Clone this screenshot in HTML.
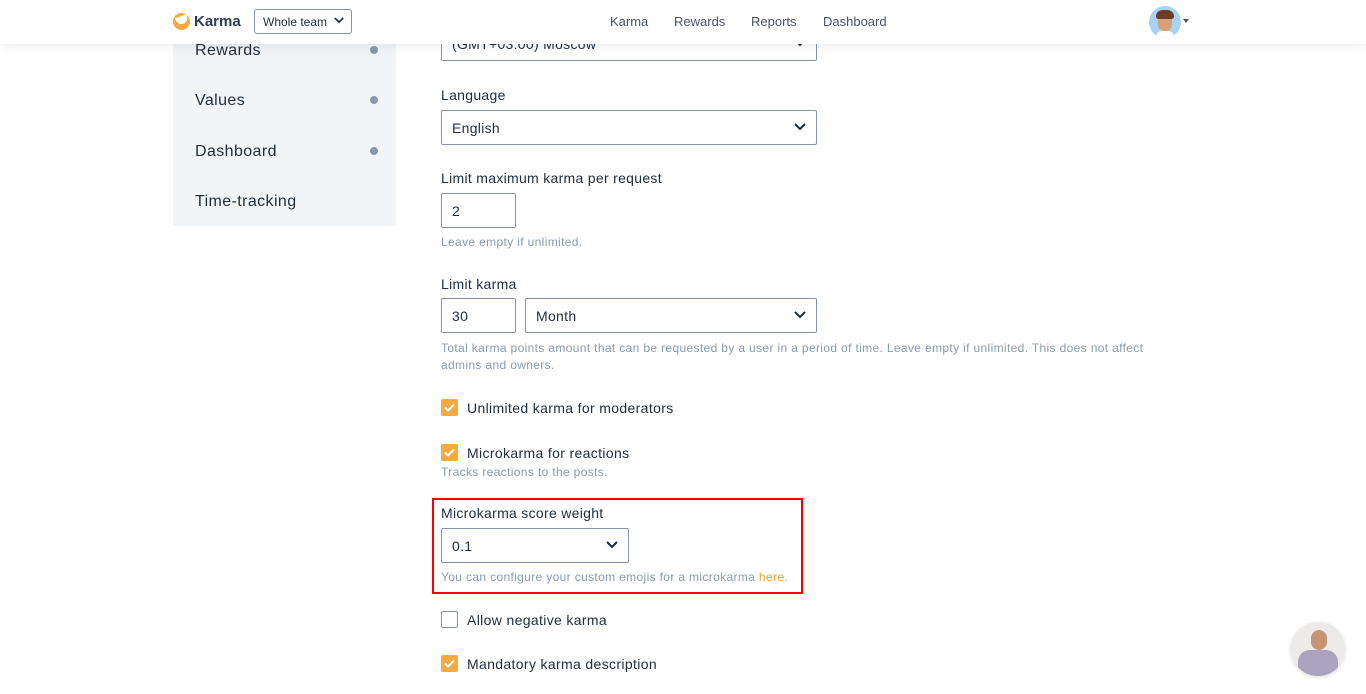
<!DOCTYPE html>
<html><head><style>
*{box-sizing:border-box}
body{margin:0;width:1366px;height:694px;overflow:hidden;background:#fff;font-family:"Liberation Sans",sans-serif;color:#1f2d3d;position:relative}
.hdr{position:absolute;top:0;left:0;width:1366px;height:44px;background:#fff;box-shadow:0 2px 12px rgba(0,0,0,.08);z-index:5}
.side{position:absolute;left:173px;top:20px;width:223px;height:206px;background:#f2f5f8}
.si{position:absolute;left:22px;font-size:16px;color:#1f2d3d;letter-spacing:.4px}
.dot{position:absolute;left:197px;width:8px;height:8px;border-radius:50%;background:#8a98a8}
.a{position:absolute}
.lbl{position:absolute;left:441px;font-size:14px;color:#1f2d3d;letter-spacing:.3px}
.sel{position:absolute;border:1px solid #8593a3;border-radius:2px;background:#fff;font-size:14px;padding-left:10px;display:flex;align-items:center;letter-spacing:.3px}
.chev{position:absolute;right:10px;top:50%;margin-top:-5px}
.help{position:absolute;left:441px;font-size:12px;color:#8a9bb0;line-height:17px;letter-spacing:.35px}
.cb{position:absolute;left:441px;width:17px;height:17px;border-radius:2px;background:#f5a940}
.cb svg{position:absolute;left:3px;top:4px}
.cbl{position:absolute;left:467px;font-size:14px;letter-spacing:.35px}
</style></head><body>
<div class="side">
<div class="si" style="top:22px">Rewards</div><div class="dot" style="top:26px"></div>
<div class="si" style="top:72px">Values</div><div class="dot" style="top:76px"></div>
<div class="si" style="top:123px">Dashboard</div><div class="dot" style="top:127px"></div>
<div class="si" style="top:173px">Time-tracking</div>
</div>
<div class="sel" style="left:441px;top:26px;width:376px;height:35px">(GMT+03:00) Moscow<svg class="chev" width="12" height="8" viewBox="0 0 12 8"><path d="M1 1l5 5 5-5" stroke="#1f2d3d" stroke-width="2" fill="none"/></svg></div>
<div class="hdr">
<div class="a" style="left:173px;top:13px;width:17px;height:17px;border-radius:50%;background:#f5a940;overflow:hidden"><div style="position:absolute;left:3px;top:3px;width:12px;height:8px;border-radius:0 0 8px 8px;background:#fff;transform:rotate(-20deg)"></div></div>
<div class="a" style="left:194px;top:13px;font-size:15px;font-weight:bold;color:#2d3b55">Karma</div>
<div class="sel" style="left:254px;top:9px;width:98px;height:25px;font-size:12px;padding-left:8px;border-radius:3px;letter-spacing:0">Whole team<svg class="chev" style="right:7px" width="10" height="7" viewBox="0 0 12 8"><path d="M1 1l5 5 5-5" stroke="#1f2d3d" stroke-width="2" fill="none"/></svg></div>
<div class="a" style="left:610px;top:14px;font-size:13px;color:#4a5568">Karma</div>
<div class="a" style="left:674px;top:14px;font-size:13px;color:#4a5568">Rewards</div>
<div class="a" style="left:751px;top:14px;font-size:13px;color:#4a5568">Reports</div>
<div class="a" style="left:823px;top:14px;font-size:13px;color:#4a5568">Dashboard</div>
<div class="a" style="left:1149px;top:6px;width:32px;height:32px;border-radius:50%;background:#a9d3f5;overflow:hidden">
<div class="a" style="left:9px;top:9px;width:14px;height:16px;border-radius:6px;background:#d9a07a"></div>
<div class="a" style="left:7px;top:4px;width:18px;height:9px;border-radius:8px 8px 3px 3px;background:#6b3d24"></div>
<div class="a" style="left:7px;top:25px;width:18px;height:8px;background:#fff;border-radius:6px 6px 0 0"></div></div>
<div class="a" style="left:1183px;top:19px;border:3px solid transparent;border-top:4px solid #555"></div>
</div>
<div class="lbl" style="top:87px">Language</div>
<div class="sel" style="left:441px;top:110px;width:376px;height:35px">English<svg class="chev" width="12" height="8" viewBox="0 0 12 8"><path d="M1 1l5 5 5-5" stroke="#1f2d3d" stroke-width="2" fill="none"/></svg></div>
<div class="lbl" style="top:170px">Limit maximum karma per request</div>
<div class="sel" style="left:441px;top:193px;width:75px;height:35px">2</div>
<div class="help" style="top:234px">Leave empty if unlimited.</div>
<div class="lbl" style="top:276px">Limit karma</div>
<div class="sel" style="left:441px;top:298px;width:75px;height:35px">30</div>
<div class="sel" style="left:525px;top:298px;width:292px;height:35px">Month<svg class="chev" width="12" height="8" viewBox="0 0 12 8"><path d="M1 1l5 5 5-5" stroke="#1f2d3d" stroke-width="2" fill="none"/></svg></div>
<div class="help" style="top:340px;width:740px">Total karma points amount that can be requested by a user in a period of time. Leave empty if unlimited. This does not affect admins and owners.</div>
<div class="cb" style="top:399px"><svg width="11" height="9" viewBox="0 0 11 9"><path d="M1 4.5l3 3 6-6" stroke="#fff" stroke-width="2" fill="none"/></svg></div>
<div class="cbl" style="top:400px">Unlimited karma for moderators</div>
<div class="cb" style="top:444px"><svg width="11" height="9" viewBox="0 0 11 9"><path d="M1 4.5l3 3 6-6" stroke="#fff" stroke-width="2" fill="none"/></svg></div>
<div class="cbl" style="top:445px">Microkarma for reactions</div>
<div class="help" style="top:464px">Tracks reactions to the posts.</div>
<div class="a" style="left:432px;top:498px;width:371px;height:96px;border:2px solid #f00"></div>
<div class="lbl" style="top:505px">Microkarma score weight</div>
<div class="sel" style="left:441px;top:528px;width:188px;height:35px">0.1<svg class="chev" width="12" height="8" viewBox="0 0 12 8"><path d="M1 1l5 5 5-5" stroke="#1f2d3d" stroke-width="2" fill="none"/></svg></div>
<div class="help" style="top:569px">You can configure your custom emojis for a microkarma <span style="color:#f5a020">here</span>.</div>
<div class="cb" style="top:611px;background:#fff;border:1px solid #8593a3"></div>
<div class="cbl" style="top:612px">Allow negative karma</div>
<div class="cb" style="top:655px"><svg width="11" height="9" viewBox="0 0 11 9"><path d="M1 4.5l3 3 6-6" stroke="#fff" stroke-width="2" fill="none"/></svg></div>
<div class="cbl" style="top:656px">Mandatory karma description</div>
<div class="a" style="left:1291px;top:622px;width:54px;height:54px;border-radius:50%;background:#ecebea;overflow:hidden;box-shadow:0 1px 4px rgba(0,0,0,.15)">
<div class="a" style="left:20px;top:8px;width:16px;height:20px;border-radius:8px;background:#c89478"></div>
<div class="a" style="left:7px;top:28px;width:40px;height:30px;border-radius:12px 12px 0 0;background:#a9a3bf"></div></div>
</body></html>
